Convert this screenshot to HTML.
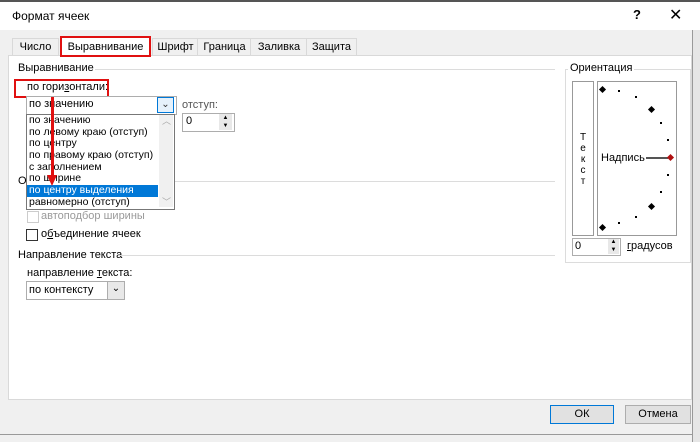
<!DOCTYPE html>
<html><head><meta charset="utf-8"><style>
body{margin:0;width:700px;height:442px;background:#f0f0f0;font-family:"Segoe UI","Liberation Sans",sans-serif;font-size:11px;color:#000;position:relative;overflow:hidden}
.a{position:absolute;white-space:nowrap}
.tab{position:absolute;top:38px;height:17px;border:1px solid #d9d9d9;border-bottom:none;background:#f0f0f0;text-align:center;line-height:16px;font-size:11px}
.line{position:absolute;height:1px;background:#dcdcdc}
.box{position:absolute;border:1px solid #adadad;background:#fff}
.li{height:11.7px;line-height:11.7px;padding-left:2px;font-size:10.5px}
.dot{position:absolute;width:2px;height:2px;background:#000}
.dia{position:absolute;width:5px;height:5px;background:#000;transform:rotate(45deg)}
</style></head><body>
<div class="a" style="left:0;top:0;width:700px;height:30px;background:#fff"></div>
<div class="a" style="left:0;top:0;width:700px;height:2px;background:#555"></div>
<div class="a" style="left:12px;top:9px;font-size:12px">Формат ячеек</div>
<div class="a" style="left:633px;top:7px;font-size:13px;font-weight:bold">?</div>
<div class="a" style="left:669px;top:5px;font-size:16px">✕</div>
<div class="a" style="left:692px;top:30px;width:8px;height:412px;background:#e6e6e6;border-left:1px solid #999"></div>
<div class="tab" style="left:12px;width:45px">Число</div>
<div class="tab" style="left:152px;width:45px">Шрифт</div>
<div class="tab" style="left:197px;width:53px">Граница</div>
<div class="tab" style="left:250px;width:56px">Заливка</div>
<div class="tab" style="left:306px;width:49px">Защита</div>
<div class="a" style="left:8px;top:55px;width:682px;height:343px;background:#fff;border:1px solid #d9d9d9"></div>
<div class="a" style="left:60px;top:36px;width:91px;height:21px;background:#fff;border:2px solid #e01010;box-sizing:border-box;text-align:center;line-height:18px">Выравнивание</div>

<div class="a" style="left:18px;top:62px">Выравнивание</div>
<div class="line" style="left:95px;top:69px;width:460px"></div>
<div class="a" style="left:14px;top:79px;width:95px;height:19px;border:2px solid #e01010;box-sizing:border-box"></div>
<div class="a" style="left:27px;top:81px">по гори<u>з</u>онтали:</div>
<div class="box" style="left:26px;top:96px;width:149px;height:17px"></div>
<div class="a" style="left:29px;top:98px">по значению</div>
<div class="a" style="left:157px;top:97px;width:17px;height:16px;background:#e5f1fb;border:1px solid #0078d7;box-sizing:border-box;text-align:center;font-size:10px;line-height:14px;color:#333">⌄</div>
<div class="box" style="left:26px;top:114px;width:147px;height:94px;border-color:#777">
<div class="li">по значению</div><div class="li">по левому краю (отступ)</div><div class="li">по центру</div><div class="li">по правому краю (отступ)</div><div class="li">с заполнением</div><div class="li">по ширине</div><div class="li" style="background:#0078d7;color:#fff;width:129px">по центру выделения</div><div class="li">равномерно (отступ)</div>
</div>
<div class="a" style="left:159px;top:115px;width:14px;height:92px;background:#f0f0f0"></div>
<div class="a" style="left:162px;top:114px;color:#aaa;font-size:9px">︿</div>
<div class="a" style="left:162px;top:195px;color:#aaa;font-size:9px">﹀</div>
<div class="a" style="left:51px;top:97px;width:3px;height:80px;background:#e01010"></div>
<div class="a" style="left:47px;top:175px;width:0;height:0;border-left:5px solid transparent;border-right:5px solid transparent;border-top:11px solid #e01010"></div>
<div class="a" style="left:182px;top:99px;color:#555">отступ:</div>
<div class="box" style="left:182px;top:113px;width:51px;height:17px"></div>
<div class="a" style="left:186px;top:115px">0</div>
<div class="a" style="left:219px;top:114px;width:13px;height:16px;background:#e8e8e8;font-size:6px;line-height:8px;text-align:center">▲<br>▼</div>

<div class="a" style="left:18px;top:175px">О</div>
<div class="line" style="left:175px;top:181px;width:380px"></div>
<div class="a" style="left:27px;top:211px;width:10px;height:10px;border:1px solid #ccc"></div>
<div class="a" style="left:41px;top:210px;color:#999">автоподбор ширины</div>
<div class="a" style="left:26px;top:229px;width:10px;height:10px;border:1px solid #333"></div>
<div class="a" style="left:41px;top:228px">о<u>б</u>ъединение ячеек</div>
<div class="a" style="left:18px;top:249px">Направление текста</div>
<div class="line" style="left:120px;top:255px;width:435px"></div>
<div class="a" style="left:27px;top:267px">направление <u>т</u>екста:</div>
<div class="box" style="left:26px;top:281px;width:97px;height:17px"></div>
<div class="a" style="left:29px;top:284px">по контексту</div>
<div class="a" style="left:107px;top:282px;width:16px;height:17px;background:#e8e8e8;border-left:1px solid #adadad;text-align:center;font-size:10px;line-height:14px">⌄</div>

<div class="a" style="left:565px;top:69px;width:124px;height:192px;border:1px solid #dcdcdc"></div>
<div class="a" style="left:568px;top:62px;background:#fff;padding:0 2px">Ориентация</div>
<div class="a" style="left:572px;top:81px;width:20px;height:153px;border:1px solid #999"></div>
<div class="a" style="left:579px;top:132px;font-size:10px;line-height:11px;text-align:center;width:8px;white-space:normal">Т е к с т</div>
<div class="a" style="left:597px;top:81px;width:78px;height:153px;border:1px solid #999"></div>
<div class="a" style="left:601px;top:152px">Надпись</div>
<div class="a" style="left:646px;top:157px;width:22px;height:2px;background:#555"></div>
<div class="a" style="left:668px;top:155px;width:5px;height:5px;background:#b01010;transform:rotate(45deg)"></div>
<div class="dia" style="left:600px;top:87px"></div><div class="dot" style="left:618px;top:90px"></div><div class="dot" style="left:635px;top:96px"></div><div class="dia" style="left:649px;top:107px"></div><div class="dot" style="left:660px;top:122px"></div><div class="dot" style="left:667px;top:139px"></div>
<div class="dot" style="left:667px;top:174px"></div><div class="dot" style="left:660px;top:191px"></div><div class="dia" style="left:649px;top:204px"></div><div class="dot" style="left:635px;top:216px"></div><div class="dot" style="left:618px;top:222px"></div><div class="dia" style="left:600px;top:225px"></div>
<div class="box" style="left:572px;top:238px;width:47px;height:16px"></div>
<div class="a" style="left:575px;top:240px">0</div>
<div class="a" style="left:608px;top:239px;width:11px;height:15px;background:#e8e8e8;font-size:6px;line-height:7.5px;text-align:center">▲<br>▼</div>
<div class="a" style="left:627px;top:240px"><u>г</u>радусов</div>

<div class="a" style="left:550px;top:405px;width:64px;height:19px;background:#e1e1e1;border:1px solid #0078d7;box-sizing:border-box;text-align:center;line-height:17px">ОК</div>
<div class="a" style="left:625px;top:405px;width:66px;height:19px;background:#e1e1e1;border:1px solid #adadad;box-sizing:border-box;text-align:center;line-height:17px">Отмена</div>
<div class="a" style="left:0;top:434px;width:692px;height:1px;background:#999"></div>
</body></html>
